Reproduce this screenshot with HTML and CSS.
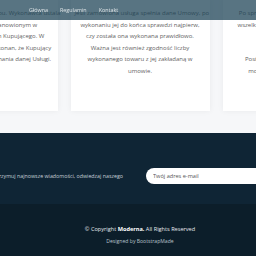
FILE: index.html
```html
<!DOCTYPE html>
<html lang="pl">
<head>
  <meta charset="UTF-8" />
  <meta name="viewport" content="width=device-width, initial-scale=1.0" />
  <title>Moderna - Regulamin</title>
  <link rel="stylesheet" href="styles.css">
</head>
<body>
  <!-- Header -->
  <header class="header">
    <nav class="nav">
      <a href="#">Główna</a>
      <a href="#">Regulamin</a>
      <a href="#">Kontakt</a>
    </nav>
  </header>

  <!-- Regulamin -->
  <section class="terms">
    <div class="cards">
      <div class="card">
        <p>ustalonych warunków zakupu. Wykonawca ustala<br>
        termin w zakresie ustanowionym w<br>
        porozumieniu z Klientem Kupującego. W<br>
        razie wątpliwości jest przekonan, że Kupujący<br>
        zaakceptował zakres wykonania danej Usługi.</p>
      </div>
      <div class="card">
        <p>Jeśli zamówiona usługa spełnia dane Umowy, po<br>
        wykonaniu jej do końca sprawdzi najpierw,<br>
        czy została ona wykonana prawidłowo.<br>
        Ważna jest również zgodność liczby<br>
        wykonanego towaru z jej zakładaną w<br>
        umowie.</p>
      </div>
      <div class="card">
        <p>Po sprawdzeniu zamówienia Kupujący<br>
        wszelkie uwagi przekazuje Wykonawcy,<br>
        aby dać czas na poprawki<br>
        patrz punkt 4.<br>
        Postanowienia dotyczące zwrotu i<br>
        motoru oraz części zamiennych<br>
        usługi kończą Umowę.</p>
      </div>
    </div>
  </section>

  <!-- Footer -->
  <footer class="footer">
    <div class="newsletter">
      <div class="newsletter-text">
        <p>Zapisz się i otrzymuj najnowsze wiadomości, odwiedzaj naszego</p>
      </div>
      <form class="newsletter-form">
        <input type="email" placeholder="Twój adres e-mail">
      </form>
    </div>
    <div class="copyright">
      <p>© Copyright <strong>Moderna.</strong> All Rights Reserved</p>
      <p class="credits">Designed by BootstrapMade</p>
    </div>
  </footer>
</body>
</html>
```

FILE: styles.css
```css
html { overflow:hidden; background:#0c1e2a; }
body {
  margin:0;
  width:280px;
  font-family:"Open Sans", "Liberation Sans", sans-serif;
  color:#555;
}
p { margin:0; }

/* Header */
.header {
  position:fixed;
  top:0; left:0; right:0;
  height:20px;
  display:flex;
  align-items:center;
  padding-left:29px;
  background:rgba(30,67,86,0.74);
  z-index:10;
}
.nav { display:flex; gap:12px; }
.nav a {
  color:rgba(255,255,255,0.8);
  text-decoration:none;
  font-size:5.4px;
}

/* Regulamin */
.terms {
  background:#f6f7f9;
  padding-bottom:22px;
}
.cards {
  display:flex;
  justify-content:center;
  gap:13px;
}
.card {
  flex-shrink:0;
  width:139px;
  box-sizing:border-box;
  padding:8px 4px 22px;
  background:#fff;
  box-shadow:0 0 6px rgba(0,0,0,0.06);
  text-align:center;
  font-size:6px;
  line-height:11.5px;
  white-space:nowrap;
  color:#5f5f5f;
}

/* Footer */
.footer { background:#0c1e2a; color:#fff; }
.newsletter {
  display:grid;
  grid-template-columns:minmax(0,1fr) minmax(0,1fr);
  align-items:center;
  padding:35px 0 20px;
  background:#0f2535;
}
.newsletter-text {
  display:flex;
  justify-content:flex-end;
  padding-right:17px;
  white-space:nowrap;
  font-size:5.3px;
  color:#c5cfd7;
}
.newsletter-form { margin:0; padding-left:6px; }
.newsletter-form input {
  display:block;
  width:100%;
  height:16px;
  box-sizing:border-box;
  border:none;
  border-radius:8px;
  padding:0 7px;
  background:#fff;
  font-family:inherit;
  font-size:5.6px;
  outline:none;
}
.newsletter-form input::placeholder { color:#555; }
.copyright {
  text-align:center;
  padding:20px 0 12px;
  font-size:5.6px;
  line-height:10px;
  color:#e6ebef;
}
.copyright strong { color:#fff; }
.copyright .credits {
  margin-top:2px;
  font-size:5.1px;
  color:#b7c2ca;
}
```
